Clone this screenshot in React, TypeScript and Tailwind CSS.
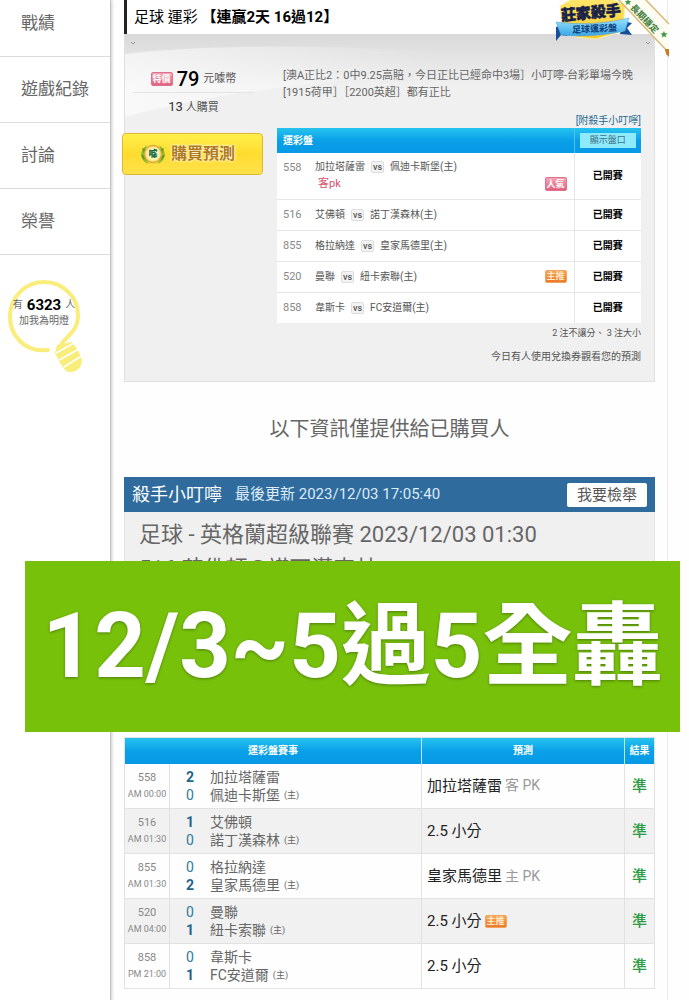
import type { ReactNode } from "react";

type Match = {
  id: string;
  time: string;
  away: string;
  home: string;
  score: [number, number];
  pick: string;
  pickNote?: string;
  push?: boolean;
};

const MATCHES: Match[] = [
  { id: "558", time: "AM 00:00", away: "加拉塔薩雷", home: "佩迪卡斯堡", score: [2, 0], pick: "加拉塔薩雷", pickNote: "客 PK" },
  { id: "516", time: "AM 01:30", away: "艾佛頓", home: "諾丁漢森林", score: [1, 0], pick: "2.5 小分" },
  { id: "855", time: "AM 01:30", away: "格拉納達", home: "皇家馬德里", score: [0, 2], pick: "皇家馬德里", pickNote: "主 PK" },
  { id: "520", time: "AM 04:00", away: "曼聯", home: "紐卡索聯", score: [0, 1], pick: "2.5 小分", push: true },
  { id: "858", time: "PM 21:00", away: "韋斯卡", home: "FC安道爾", score: [0, 1], pick: "2.5 小分" },
];

const NAV_ITEMS = ["戰績", "遊戲紀錄", "討論", "榮譽"];

function PinkTag({ children }: { children: ReactNode }) {
  return (
    <span className="inline-flex h-[14px] w-[22px] items-center justify-center rounded-xs border border-[#e0718d] bg-linear-to-b from-[#f4a5b8] to-[#e0607f] text-[9px] leading-none font-bold text-white">
      {children}
    </span>
  );
}

function OrangeTag() {
  return (
    <span className="inline-flex h-[13px] w-[22px] shrink-0 items-center justify-center rounded-xs border border-[#f3a45c] bg-linear-to-b from-[#f6a85a] to-[#e9772a] text-[9px] leading-none font-bold text-[#ffe9c4]">
      主推
    </span>
  );
}

function Sidebar() {
  return (
    <aside className="w-[111px] shrink-0 border-r border-[#c4c4c4] bg-white shadow-[1px_0_3px_rgba(0,0,0,0.2)]">
      <nav className="-mt-[9px]">
        {NAV_ITEMS.map((item) => (
          <a
            key={item}
            href="#"
            className="flex h-[66px] items-center border-b border-[#dcdcdc] pl-[21px] text-[17px] text-[#666]"
          >
            {item}
          </a>
        ))}
      </nav>
      <LightBulb />
    </aside>
  );
}

function LightBulb() {
  return (
    <div className="relative mt-[22px] h-[100px] w-[88px]">
      <svg viewBox="0 0 88 100" className="absolute inset-0 h-full w-full" fill="none">
        <path
          d="M48 73 C24 76 9 57 10 38 C11 19 26 5 44 5 C63 5 78 20 78 38 C78 59 60 60 58 76"
          stroke="#f9ee7c"
          strokeWidth="4"
          strokeLinecap="round"
        />
        <path
          d="M57 68 L55 76 L60 86 L66 94 C73 97 82 93 82 83 L78 73 L72 65 Z"
          fill="#f9ee7c"
        />
        <path d="M56 76 L74 66 M59 83 L79 72 M64 90 L83 78" stroke="#fff" strokeWidth="1.5" />
      </svg>
      <div className="relative pt-[20px] text-center text-[10px] leading-[16px] text-[#666]">
        <div className="flex items-center justify-center gap-1">
          有<strong className="text-[15px] text-black">6323</strong>人
        </div>
        加我為明燈
      </div>
    </div>
  );
}

function KillerBadge() {
  return (
    <svg viewBox="0 0 118 58" className="absolute -top-px -right-[15px] z-10 h-[58px] w-[118px]">
      <defs>
        <linearGradient id="gold" x1="0" y1="0" x2="0" y2="1">
          <stop offset="0" stopColor="#ffe76b" />
          <stop offset="1" stopColor="#f6c62b" />
        </linearGradient>
        <linearGradient id="sky" x1="0" y1="0" x2="0" y2="1">
          <stop offset="0" stopColor="#9be3ff" />
          <stop offset="1" stopColor="#3aa6e6" />
        </linearGradient>
      </defs>
      <path d="M4 28 L14 25 L15 37 L9 36 L4 42 Z" fill="#154f98" />
      <path d="M70 22 L80 24 L75 29 L80 36 L68 35 Z" fill="#154f98" />
      <path d="M8 7 L20 0 L60 0 L73 6 L71 32 L44 40 L24 38 L11 28 Z" fill="url(#gold)" stroke="#fff3a0" />
      <text x="9" y="19" fontSize="15" fontWeight="900" fill="#172047" stroke="#172047" strokeWidth="0.5" transform="rotate(-5 40 16)">
        莊家殺手
      </text>
      <path d="M4 23 Q40 28 77 19 L73 32 Q40 39 9 36 Z" fill="url(#sky)" stroke="#4d9dd4" strokeWidth="0.5" />
      <text x="20" y="33" fontSize="9" fontWeight="700" fill="#0c3a78" transform="rotate(-3 40 30)">
        足球運彩盤
      </text>
      <path d="M66 0 L92 0 L117 25 L117 54 Z" fill="#fffdf2" />
      <path d="M66 0 L117 54 M93 0 L117 25" stroke="#d8b979" strokeWidth="1.5" />
      <path d="M113 50 L117 50 L117 58 L114 55 Z" fill="#c87a2b" />
      <text x="80" y="10" fontSize="9" fontWeight="700" fill="#3c7b38" transform="rotate(46 80 7)">
        長期穩定
      </text>
      <path d="M76 0 l1 2 2.500 .2 -2 1.600 .6 2.200 -2.100 -1.200 -2 1.300 .4 -2.300 -1.700 -1.500 2.300 -.3z" fill="#3f9a4b" />
      <path d="M112 32 l1 2.300 2.600 .2 -2 1.700 .6 2.400 -2.200 -1.300 -2.100 1.400 .5 -2.500 -1.900 -1.600 2.400 -.3z" fill="#3f9a4b" />
    </svg>
  );
}

function CoinIcon() {
  return (
    <svg viewBox="0 0 28 22" className="h-[22px] w-[28px]">
      <path d="M8 2 C-1 8 1 18 10 21 C6 16 5 9 8 2Z M20 2 C29 8 27 18 18 21 C22 16 23 9 20 2Z" fill="#8cba35" />
      <path d="M3 5 L9 7 L5 10Z M2 12 L8 13 L5 17Z M25 5 L19 7 L23 10Z M26 12 L20 13 L23 17Z" fill="#5f9a2c" />
      <circle cx="14" cy="11" r="8.500" fill="#ffe77a" stroke="#dda934" strokeWidth="1.500" />
      <circle cx="14" cy="11" r="6" fill="#f8f6b0" />
      <text x="14" y="14" textAnchor="middle" fontSize="9" fontWeight="900" fill="#216a35">
        噱
      </text>
    </svg>
  );
}

function PurchaseColumn() {
  return (
    <div className="w-[152px] shrink-0 pt-[32px]">
      <div className="mr-[23px] ml-[8px] text-center text-[11px] text-[#555]">
        <div className="flex h-[27px] items-center justify-center gap-1 border-b border-[#e4e4e4]">
          <PinkTag>特價</PinkTag>
          <span className="text-[20px] font-medium text-black">79</span>
          元噱幣
        </div>
        <div className="h-[27px] leading-[27px]">
          <span className="text-[13px] text-[#333]">13</span> 人購買
        </div>
      </div>
      <button
        type="button"
        className="mt-[13px] -ml-[3px] flex h-[42px] w-[141px] items-center gap-1 rounded-sm border border-[#dfb634] bg-linear-to-b from-[#fff04a] via-[#ffdc2e] to-[#ffe24a] pl-[16px] text-[16px] font-bold text-[#b07a1c] [text-shadow:0_0_2px_#fff,0_0_3px_#fff]"
      >
        <CoinIcon />
        購買預測
      </button>
    </div>
  );
}

function MatchTable() {
  return (
    <table className="w-full border-collapse bg-white text-[10px] text-[#555]">
      <thead>
        <tr className="h-[25px] bg-linear-to-b from-[#25c3ee] via-[#0aa0e8] to-[#0799e6] text-left text-white">
          <th colSpan={2} className="border-r border-[#4fc0f0] pl-[6px] font-bold">
            運彩盤
          </th>
          <th className="w-[67px] px-[5px]">
            <button type="button" className="block h-[15px] w-full bg-[#8feafb] text-[9px] leading-[15px] font-normal text-[#3c7285]">
              顯示盤口
            </button>
          </th>
        </tr>
      </thead>
      <tbody>
        {MATCHES.map((m, i) => (
          <tr key={m.id} className={i === 0 ? "h-[46px] border-b border-[#e6e6e6]" : "h-[31px] border-b border-[#e6e6e6] last:border-b-0"}>
            <td className="w-[38px] pt-[8px] pl-[6px] align-top text-[11px] leading-[13px] text-[#888]">{m.id}</td>
            <td className="border-r border-[#e6e6e6] pr-[7px] leading-[14px]">
              <div className="flex items-center gap-[6px]">
                {m.away}
                <span className="rounded-xs border border-[#ddd] bg-[#f3f3f3] px-px text-[9px] leading-[10px] font-medium">vs</span>
                {m.home}(主)
                {m.push && (
                  <span className="ml-auto flex">
                    <OrangeTag />
                  </span>
                )}
              </div>
              {i === 0 && (
                <div className="mt-[3px] flex items-center justify-between pl-[3px] text-[11px] text-[#d5536f]">
                  客pk
                  <PinkTag>人氣</PinkTag>
                </div>
              )}
            </td>
            <td className="text-center font-bold text-black">已開賽</td>
          </tr>
        ))}
      </tbody>
    </table>
  );
}

function ForecastCard() {
  return (
    <section className="relative">
      <header className="flex h-[34px] items-center border-l-3 border-[#222] bg-white pl-[7px] text-[15px] text-black">
        <h1>
          足球 運彩 <strong>【連贏2天 16過12】</strong>
        </h1>
      </header>
      <KillerBadge />
      <div className="relative flex border border-t-0 border-[#e0e0e0] bg-linear-to-b from-[#d9d9d9] via-[#f0f0f0] via-15% to-[#f0f0f0]">
        <svg viewBox="0 0 530 90" className="absolute inset-x-0 top-0 h-[90px] w-full" preserveAspectRatio="none">
          <defs>
            <linearGradient id="swoosh" x1="0" y1="0" x2="1" y2="0">
              <stop offset="0" stopColor="#fff" stopOpacity="0.6" />
              <stop offset="0.6" stopColor="#fff" stopOpacity="0" />
            </linearGradient>
          </defs>
          <path d="M0 20 Q160 0 530 34 Q180 34 0 83 Z" fill="url(#swoosh)" />
          <path d="M6 8 l2 2 2 -2 M522 8 l2 2 2 -2" stroke="#999" fill="none" />
        </svg>
        <div className="relative flex min-w-0 flex-1">
          <PurchaseColumn />
          <div className="min-w-0 flex-1 pt-[33px] pr-[13px] pb-[18px]">
            <p className="pl-[6px] text-[11px] leading-[17px] whitespace-nowrap text-[#666]">
              [澳A正比2：0中9.25高賠，今日正比已經命中3場］小叮嚀-台彩單場今晚
              <br />
              [1915荷甲］［2200英超］都有正比
            </p>
            <a href="#" className="mt-[13px] block text-right text-[10px] leading-[14px] text-[#23698f]">
              [附殺手小叮嚀]
            </a>
            <MatchTable />
            <p className="mt-1 text-right text-[9px] leading-[13px] text-[#555]">2 注不讓分、 3 注大小</p>
            <p className="mt-[10px] text-right text-[10px] leading-[13px] text-[#555]">今日有人使用兌換券觀看您的預測</p>
          </div>
        </div>
      </div>
    </section>
  );
}

function TeamLine({ score, win, name, home }: { score: number; win: boolean; name: string; home?: boolean }) {
  return (
    <div className="flex items-center text-[14px] leading-[18px]">
      <span className={win ? "w-[24px] font-bold text-[#1f6689]" : "w-[24px] text-[#2c7ca0]"}>{score}</span>
      {name}
      {home && <span className="pl-1 text-[9px]">(主)</span>}
    </div>
  );
}

function ResultTable() {
  return (
    <table className="w-full border-collapse border border-[#e2e2e2] text-[#666]">
      <thead>
        <tr className="h-[26px] bg-linear-to-b from-[#25c3ee] via-[#0aa0e8] to-[#0799e6] text-[10px] text-white">
          <th colSpan={2} className="border-r border-[#bfe9fb]">運彩盤賽事</th>
          <th className="border-r border-[#bfe9fb]">預測</th>
          <th>結果</th>
        </tr>
      </thead>
      <tbody>
        {MATCHES.map((m) => (
          <tr key={m.id} className="h-[45px] border-b border-[#e2e2e2] even:bg-[#f1f1f1]">
            <td className="w-[45px] border-r border-[#e2e2e2] text-center text-[9px] leading-[16px] whitespace-nowrap text-[#888]">
              <div className="text-[11px]">{m.id}</div>
              {m.time}
            </td>
            <td className="border-r border-[#e2e2e2] pl-[16px]">
              <TeamLine score={m.score[0]} win={m.score[0] > m.score[1]} name={m.away} />
              <TeamLine score={m.score[1]} win={m.score[1] > m.score[0]} name={m.home} home />
            </td>
            <td className="w-[203px] border-r border-[#e2e2e2] pl-[5px]">
              <div className="flex items-center gap-[3px] text-[15px] text-[#222]">
                {m.pick}
                {m.pickNote && <span className="text-[14px] text-[#999]">{m.pickNote}</span>}
                {m.push && <OrangeTag />}
              </div>
            </td>
            <td className="w-[30px] text-center text-[15px] font-medium text-[#2a9a44]">準</td>
          </tr>
        ))}
      </tbody>
    </table>
  );
}

function Report() {
  return (
    <section>
      <header className="flex h-[35px] items-center bg-[#2f6b9d] px-2 text-white">
        <h2 className="text-[18px]">殺手小叮嚀</h2>
        <span className="pl-[13px] text-[15px] text-[#dcecf8]">最後更新 2023/12/03 17:05:40</span>
        <button type="button" className="ml-auto h-[24px] w-[80px] rounded-xs bg-white text-[15px] leading-[24px] text-[#555]">
          我要檢舉
        </button>
      </header>
      <div className="mb-[11px] border border-t-0 border-[#e4e4e4] bg-[#f0f0f0] px-[14px] pt-[6px] pb-[139px] text-[22px] leading-[34px] text-[#666]">
        <p>足球 - 英格蘭超級聯賽 2023/12/03 01:30</p>
        <p>516 艾佛頓@諾丁漢森林</p>
      </div>
      <ResultTable />
    </section>
  );
}

export default function App() {
  return (
    <div className="relative flex overflow-hidden bg-[#fefefe] font-['Roboto','Noto_Sans_CJK_TC',sans-serif]">
      <Sidebar />
      <main className="mr-[21px] min-w-0 flex-1 border-r border-[#ececec] pr-[12px] pb-3 pl-[13px]">
        <ForecastCard />
        <p className="py-8 text-center text-[20px] leading-[31px] text-[#666]">以下資訊僅提供給已購買人</p>
        <Report />
      </main>
      <div className="absolute top-[561px] right-[9px] left-[25px] flex h-[171px] items-center justify-center bg-[#77c10b] text-[90px] leading-none font-bold whitespace-nowrap text-white [text-shadow:0_1px_3px_rgba(0,0,0,0.35)]">
        12/3~5過5全轟
      </div>
    </div>
  );
}
